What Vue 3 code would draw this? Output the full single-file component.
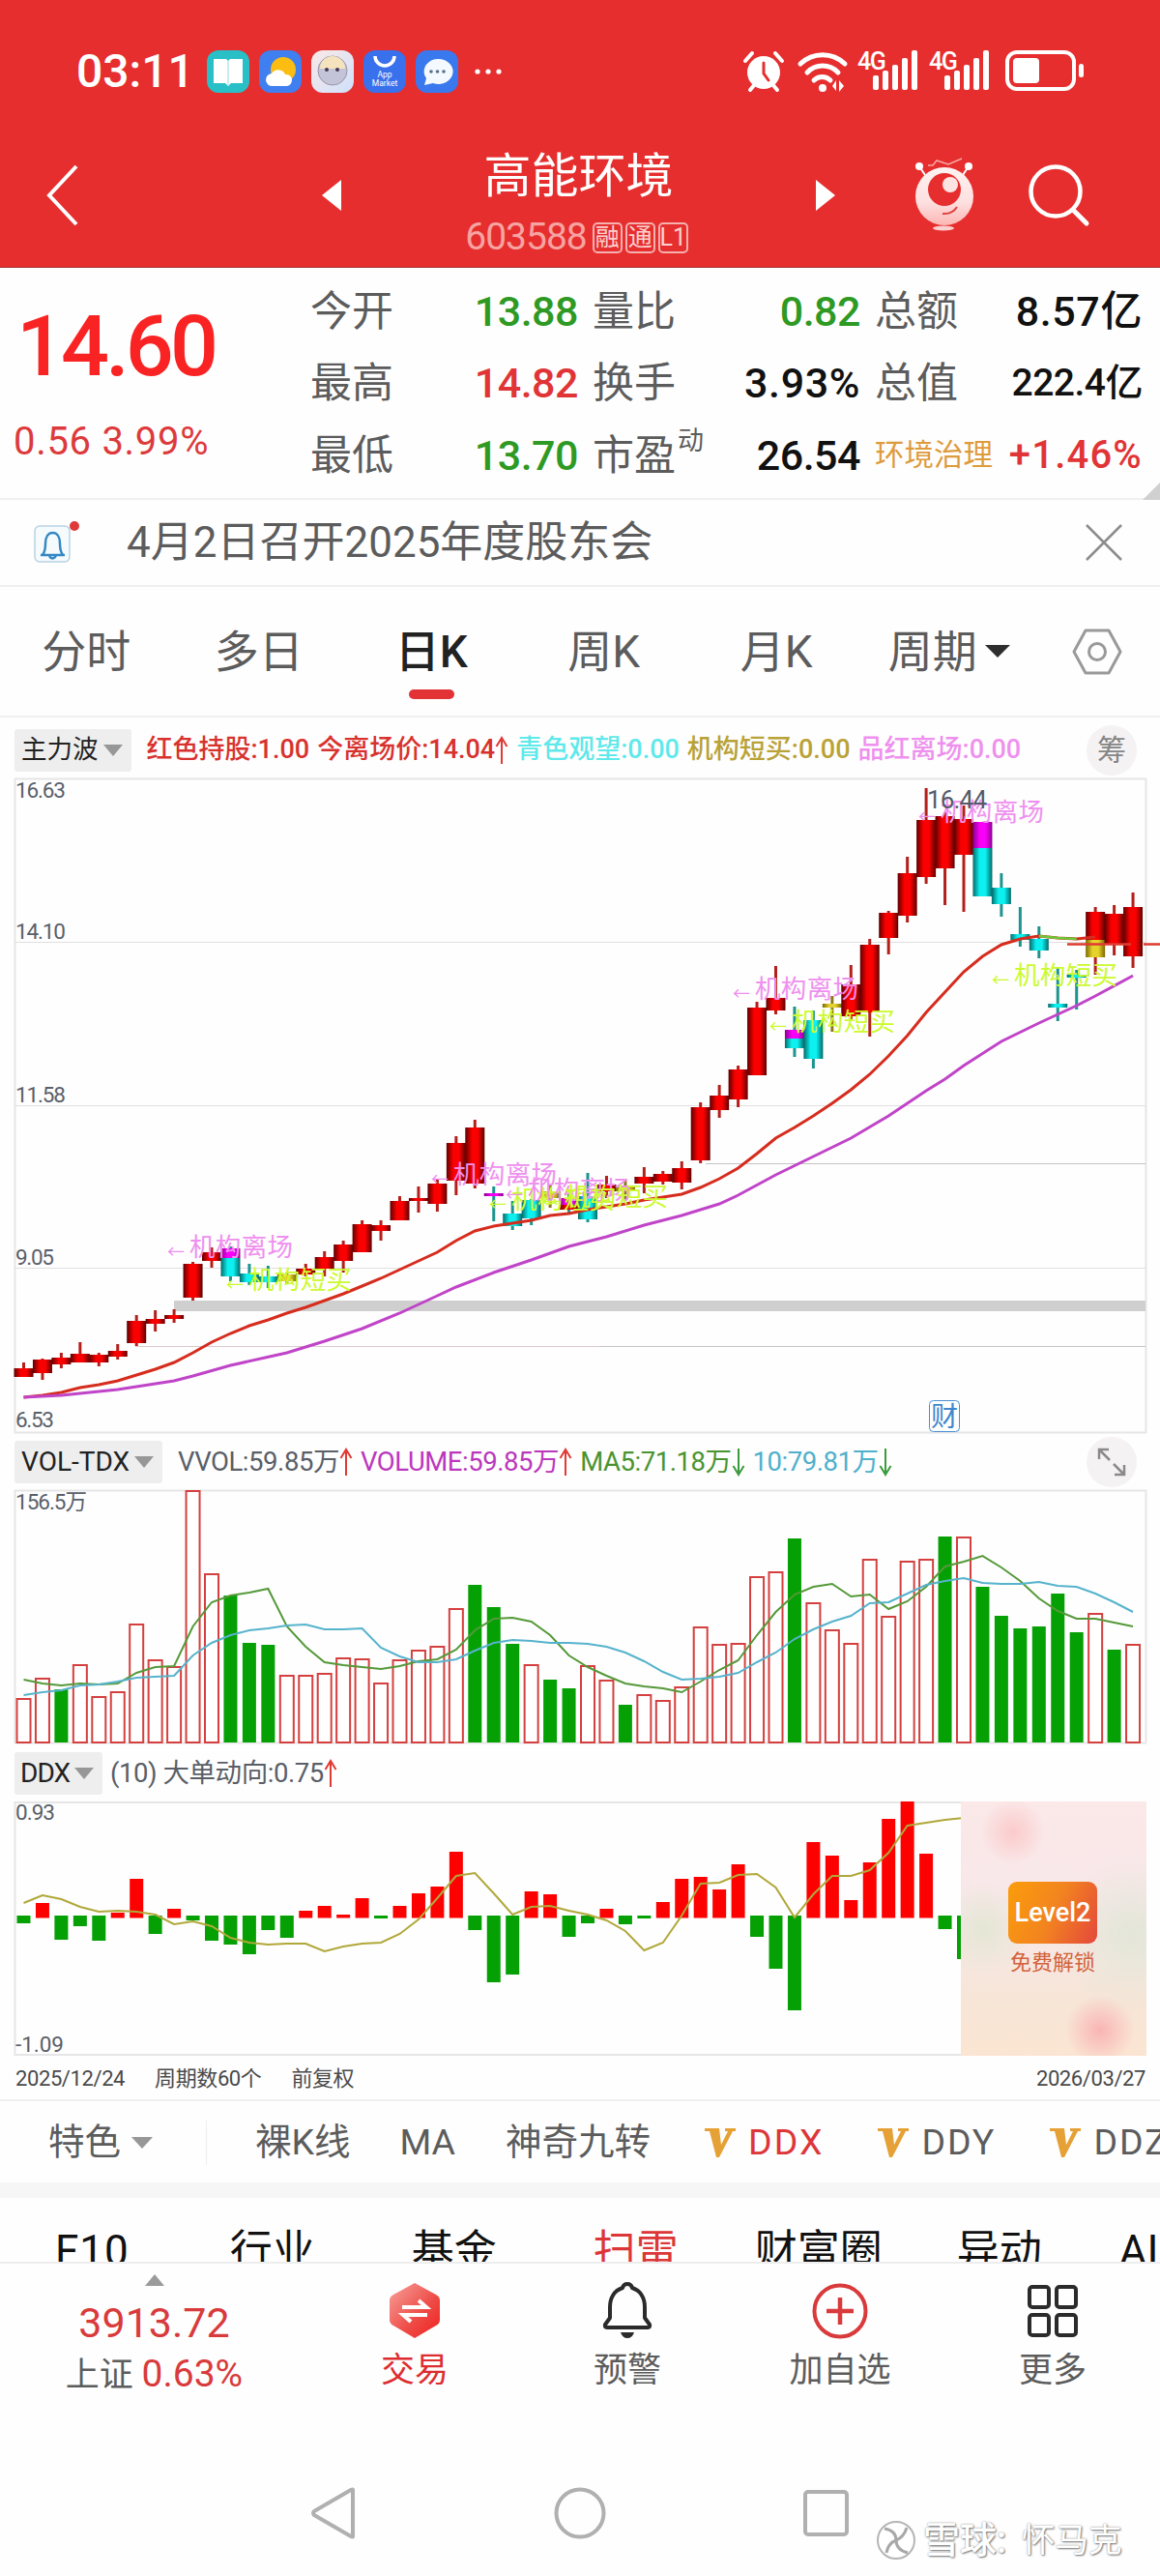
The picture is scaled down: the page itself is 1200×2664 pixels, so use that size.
<template>
  <div class="screen">
    <header class="top">
      <div class="status">
        <span class="clock">03:11</span>
        <svg class="app-icons" width="306" height="46" viewBox="0 0 306 46">
          <defs>
            <linearGradient id="bot" x1="0" y1="0" x2="1" y2="1">
              <stop offset="0" stop-color="#fbe9e6" />
              <stop offset="1" stop-color="#cfe0fb" />
            </linearGradient>
          </defs>
          <rect x="1" y="1" width="44" height="44" rx="12" fill="#28bfc6" />
          <path d="M8 10h13l2 2 2-2h13v25H26l-3 3-3-3H8z" fill="#fff" />
          <path d="M23 12v25" stroke="#b7e6ea" stroke-width="1.500" />
          <rect x="55" y="1" width="44" height="44" rx="12" fill="#3f7ff0" />
          <circle cx="80" cy="21" r="13" fill="#fbbd12" />
          <path d="M69 38a6.500 6.500 0 0 1-1-13a8 8 0 0 1 14 1a6 6 0 0 1 2 12z" fill="#fff" />
          <rect x="109" y="1" width="44" height="44" rx="12" fill="url(#bot)" />
          <circle cx="131" cy="22" r="15" fill="#c3c4d8" stroke="#9c94a8" />
          <path d="M118 20a13 13 0 0 1 26 0z" fill="#f4e3bd" />
          <circle cx="125" cy="21" r="2" fill="#4a3550" />
          <circle cx="136" cy="21" r="2" fill="#4a3550" />
          <rect x="163" y="1" width="44" height="44" rx="12" fill="#3970ec" />
          <path d="M175 7a10 10 0 0 0 20 0" fill="none" stroke="#fff" stroke-width="3.500" />
          <text x="185" y="29" class="app-text">App</text>
          <text x="185" y="38" class="app-text">Market</text>
          <rect x="217" y="1" width="44" height="44" rx="12" fill="#3a78ee" />
          <path d="M226 37l2-7a15 13 0 1 1 7 5z" fill="#f4f9ff" />
          <g fill="#5a6f8c">
            <circle cx="233" cy="23" r="1.800" />
            <circle cx="239.500" cy="23" r="1.800" />
            <circle cx="246" cy="23" r="1.800" />
          </g>
          <g fill="#fff">
            <circle cx="281" cy="23" r="2.600" />
            <circle cx="292" cy="23" r="2.600" />
            <circle cx="303" cy="23" r="2.600" />
          </g>
        </svg>
        <svg class="sys-icons" width="352" height="46" viewBox="0 0 352 46">
          <g fill="none" stroke="#fff" stroke-linecap="round">
            <path d="M2 12l7-8M40 12l-7-8M7 42l5-6M35 42l-5-6" stroke-width="4" />
            <circle cx="21" cy="24" r="17" fill="#fff" stroke="none" />
            <path d="M21 14v11l5 7" stroke="#e62e2e" stroke-width="3" />
            <path d="M59 15a33 33 0 0 1 46 0" stroke-width="5" />
            <path d="M66 24a22 22 0 0 1 32 0" stroke-width="5" />
            <path d="M73 32a12 12 0 0 1 17 0" stroke-width="5" />
          </g>
          <circle cx="82" cy="40" r="4" fill="#fff" />
          <path d="M92 38l4-6v11zM99 32v12l5-6z" fill="#fff" />
          <g fill="#fff">
            <text x="118" y="21" class="net">4G</text>
            <text x="192" y="21" class="net">4G</text>
            <template v-for="base in [134, 208]" :key="base">
              <rect v-for="n in 5" :key="n" :x="base + (n - 1) * 10" :y="42 - signal[n - 1]" width="6" :height="signal[n - 1]" rx="2" />
            </template>
            <rect x="279" y="9" width="27" height="26" rx="4" />
            <rect x="347" y="15" width="5" height="14" rx="2.500" />
          </g>
          <rect x="273" y="3" width="69" height="38" rx="10" fill="none" stroke="#fff" stroke-width="4" />
        </svg>
      </div>

      <div class="nav">
        <svg class="back" width="34" height="64" viewBox="0 0 34 64">
          <path d="M31 2L3 32l28 30" fill="none" stroke="#fff" stroke-width="4" />
        </svg>
        <svg class="prev" width="20" height="32" viewBox="0 0 20 32"><path d="M20 0v32L0 16z" fill="#fff" /></svg>
        <div class="stock">
          <h1>高能环境</h1>
          <div class="code">
            <span>603588</span><i>融</i><i>通</i><i>L1</i>
          </div>
        </div>
        <svg class="next" width="20" height="32" viewBox="0 0 20 32"><path d="M0 0v32L20 16z" fill="#fff" /></svg>
        <svg class="robot" width="62" height="76" viewBox="0 0 62 76">
          <defs>
            <linearGradient id="robot" x1="0" y1="0" x2="0" y2="1">
              <stop offset="0" stop-color="#fff3f1" />
              <stop offset=".6" stop-color="#fde0e0" />
              <stop offset="1" stop-color="#fbb6b4" />
            </linearGradient>
          </defs>
          <path d="M5 8l6 9M56 8l-6 9" stroke="#fff" stroke-width="2" />
          <circle cx="5" cy="8" r="4" fill="#fff" />
          <circle cx="56" cy="8" r="4" fill="#fff" />
          <path d="M14 7h5l4-5 12 4 14-6" fill="none" stroke="#f7a8a4" stroke-width="1.500" />
          <circle cx="31" cy="39" r="30" fill="url(#robot)" />
          <circle cx="31" cy="32" r="17" fill="#e62e2e" />
          <circle cx="37" cy="27" r="8" fill="#fde4e2" />
          <path d="M29 57q10 1 15-7" fill="none" stroke="#e0423f" stroke-width="2" />
          <ellipse cx="30" cy="72" rx="11" ry="2.500" fill="#fbcfcd" />
        </svg>
        <svg class="search" width="64" height="64" viewBox="0 0 64 64">
          <circle cx="28" cy="28" r="25.500" fill="none" stroke="#fff" stroke-width="4.500" />
          <path d="M46 47l14 14" stroke="#fff" stroke-width="5" stroke-linecap="round" />
        </svg>
      </div>
    </header>

    <section class="quote">
      <div class="price">
        <strong>14.60</strong>
        <span>0.56 3.99%</span>
      </div>
      <dl v-for="(col, c) in quotes" :key="c" :class="'col' + c">
        <div v-for="q in col" :key="q.label">
          <dt :class="{ sector: q.sector }">{{ q.label }}<sup v-if="q.sup">{{ q.sup }}</sup></dt>
          <dd :class="[q.tone, q.size]">{{ q.value }}</dd>
        </div>
      </dl>
      <i class="corner"></i>
    </section>

    <section class="notice">
      <svg width="50" height="46" viewBox="0 0 50 46">
        <rect x="2" y="6" width="36" height="37" rx="5" fill="#f5fafd" stroke="#b9d3e4" stroke-width="1.500" />
        <path d="M8 36h25M10 36q3-4 3-12c0-7 3-11 7.500-11s7.500 4 7.500 11q0 8 3 12" fill="none" stroke="#3488c4" stroke-width="2.500" />
        <path d="M17 37q3 5 7 0" fill="none" stroke="#3488c4" stroke-width="2.500" />
        <circle cx="43" cy="6" r="5" fill="#e03838" />
      </svg>
      <p>4月2日召开2025年度股东会</p>
      <svg class="close" width="38" height="38" viewBox="0 0 38 38">
        <path d="M1 1l36 36M37 1L1 37" stroke="#8c8c8c" stroke-width="2.500" />
      </svg>
    </section>

    <nav class="tabs">
      <span v-for="t in tabs" :key="t" :class="{ active: t === '日K' }">{{ t }}</span>
      <span class="more">周期<svg width="26" height="13" viewBox="0 0 26 13"><path d="M0 0h26L13 13z" fill="#2e2e2e" /></svg></span>
      <svg class="hex" width="52" height="48" viewBox="0 0 52 48">
        <path d="M14 2h24l12 22-12 22H14L2 24z" fill="none" stroke="#999" stroke-width="3" stroke-linejoin="round" />
        <circle cx="26" cy="24" r="8.500" fill="none" stroke="#999" stroke-width="3" />
      </svg>
    </nav>

    <div class="indicator main-ind">
      <b class="tag">主力波<i class="caret"></i></b>
      <div class="values">
        <span class="c-red">红色持股:1.00</span>
        <span class="c-red">今离场价:14.04<Arrow up /></span>
        <span class="c-cyan">青色观望:0.00</span>
        <span class="c-gold">机构短买:0.00</span>
        <span class="c-pink">品红离场:0.00</span>
      </div>
      <span class="round">筹</span>
    </div>

    <svg class="k-chart" width="1200" height="678" viewBox="0 0 1200 678">
      <defs>
        <linearGradient v-for="(g, key) in bodyFill" :id="'body-' + key" :key="key">
          <stop offset="0" :stop-color="g[0]" />
          <stop offset=".35" :stop-color="g[1]" />
          <stop offset=".65" :stop-color="g[1]" />
          <stop offset="1" :stop-color="g[0]" />
        </linearGradient>
      </defs>
      <rect x="15.500" y=".5" width="1170" height="676" class="frame" />
      <path d="M15 169.500H1185M15 338.500H1185M15 506.500H1185" class="grid" />
      <path d="M730 398.500H1185M620 587.500H1185" stroke="#c4c4c4" />
      <path d="M140 587.500H620" stroke="#dcc9cc" />
      <rect x="180" y="540" width="1005" height="11" fill="#cfcfcf" />
      <g class="axis">
        <text x="16" y="20" textLength="52">16.63</text>
        <text x="16" y="166" textLength="52">14.10</text>
        <text x="16" y="335" textLength="52">11.58</text>
        <text x="16" y="503" textLength="40">9.05</text>
        <text x="16" y="671" textLength="40">6.53</text>
      </g>
      <g v-for="(k, i) in candles" :key="i">
        <rect :x="barX(i) - 1.5" :y="k[2]" width="3" :height="k[3] - k[2]" :fill="wickFill[k[4]]" />
        <rect :x="barX(i) - 10" :y="k[0]" width="20" :height="k[1] - k[0]" :fill="`url(#body-${k[4]})`" />
        <rect v-if="k[5]" :x="barX(i) - 10" :y="k[5]" width="20" :height="k[6] - k[5]" :fill="`url(#body-${k[7]})`" />
      </g>
      <polyline :points="line(ma20)" fill="none" stroke="#d62c1e" stroke-width="3" />
      <polyline :points="line(ma20.slice(54, 57), 54)" fill="none" stroke="#6cc93a" stroke-width="2.500" />
      <polyline :points="sparse(ma40)" fill="none" stroke="#c044c8" stroke-width="3" />
      <path d="M1104 171.500h66M1183 171.500h17" stroke="#e03a30" stroke-width="2.500" />
      <g v-for="(m, i) in marks" :key="i" :class="['mark', m.kind]">
        <text :x="m.x" :y="m.y + 2" class="mark-arrow" textLength="18">←</text>
        <text :x="m.x + 23" :y="m.y" textLength="107">{{ m.kind === 'out' ? '机构离场' : '机构短买' }}</text>
      </g>
      <text x="959" y="31" textLength="62" class="peak">16.44</text>
      <rect x="961.500" y="643.500" width="31" height="32" rx="4" fill="#fff" stroke="#4a8fd0" />
      <text x="977" y="670" class="cai">财</text>
    </svg>

    <div class="indicator vol-ind">
      <b class="tag">VOL-TDX<i class="caret"></i></b>
      <div class="values">
        <span class="c-gray">VVOL:59.85万<Arrow up /></span>
        <span class="c-purple">VOLUME:59.85万<Arrow up /></span>
        <span class="c-green">MA5:71.18万<Arrow /></span>
        <span class="c-sky">10:79.81万<Arrow /></span>
      </div>
      <span class="round">
        <svg width="30" height="30" viewBox="0 0 30 30">
          <path d="M2 12V2h10M2 2l11 11M28 18v10H18M28 28L17 17" fill="none" stroke="#8a8a8a" stroke-width="2.500" />
        </svg>
      </span>
    </div>

    <svg class="vol-chart" width="1200" height="264" viewBox="0 0 1200 264">
      <rect x="15.500" y=".5" width="1170" height="261" class="frame" />
      <text x="16" y="20" class="axis" textLength="74">156.5万</text>
      <template v-for="(v, i) in volumes" :key="i">
        <rect v-if="isDown(i)" :x="barX(i) - 7" :y="v" width="14" :height="261 - v" fill="#04a004" />
        <rect v-else :x="barX(i) - 7" :y="v + 1" width="14" :height="260 - v" fill="#fff" stroke="#d4403f" stroke-width="2" />
      </template>
      <polyline :points="line(volMa5)" fill="none" stroke="#55993a" stroke-width="2" />
      <polyline :points="line(volMa10)" fill="none" stroke="#56b3cc" stroke-width="2" />
    </svg>

    <div class="indicator ddx-ind">
      <b class="tag">DDX<i class="caret"></i></b>
      <div class="values">
        <span class="c-gray">(10) 大单动向:0.75<Arrow up /></span>
      </div>
    </div>

    <div class="ddx">
      <svg width="994" height="264" viewBox="0 0 994 264">
        <path d="M994 1H15.500V262H994" class="frame" />
        <g class="axis">
          <text x="16" y="19" textLength="41">0.93</text>
          <text x="16" y="259" textLength="50">-1.09</text>
        </g>
        <template v-for="(v, i) in ddx" :key="i">
          <rect v-if="v < 118" :x="barX(i) - 7" :y="v" width="14" :height="120.5 - v" fill="#fd0000" />
          <rect v-else :x="barX(i) - 7" y="118" width="14" :height="v - 118" fill="#04a004" />
        </template>
        <polyline :points="line(ddxLine)" fill="none" stroke="#b0a83a" stroke-width="2" />
      </svg>
      <div class="promo">
        <b>Level2</b>
        <span>免费解锁</span>
      </div>
    </div>

    <div class="dates">
      <span>2025/12/24</span>
      <span>周期数60个</span>
      <span>前复权</span>
      <span class="end">2026/03/27</span>
    </div>

    <div class="features">
      <span class="special">特色<i class="caret"></i></span>
      <span class="plain">裸K线</span>
      <span class="ma">MA</span>
      <span class="nine">神奇九转</span>
      <span v-for="d in ['DDX', 'DDY', 'DDZ']" :key="d" class="vip" :class="{ on: d === 'DDX' }">
        <svg width="32" height="30" viewBox="0 0 32 30">
          <path d="M0 0h15l2 17 7-14h-3V0h11v3h-3L15 30h-3L5 3H0z" fill="#e5a136" />
        </svg>{{ d }}
      </span>
    </div>

    <div class="sections">
      <span v-for="(s, i) in sections" :key="s" :class="['s' + i, { on: s === '扫雷' }]">{{ s }}</span>
    </div>

    <footer class="toolbar">
      <div class="index">
        <svg width="22" height="12" viewBox="0 0 22 12"><path d="M11 0l10 12H1z" fill="#9b9b9b" /></svg>
        <strong>3913.72</strong>
        <span>上证 <em>0.63%</em></span>
      </div>
      <div class="tool trade">
        <svg width="60" height="60" viewBox="0 0 60 60">
          <defs>
            <linearGradient id="trade" x1="0" y1="0" x2="1" y2="1">
              <stop offset="0" stop-color="#f7a29c" />
              <stop offset=".6" stop-color="#ee4a45" />
              <stop offset="1" stop-color="#f02020" />
            </linearGradient>
          </defs>
          <path d="M30 2l22 12q4 2 4 6v20q0 4-4 6L30 59 8 46q-4-2-4-6V20q0-4 4-6z" fill="url(#trade)" />
          <path d="M17 27h25l-8-7M43 35H18l8 7" fill="none" stroke="#fff" stroke-width="4" />
        </svg>
        <span>交易</span>
      </div>
      <div class="tool">
        <svg width="60" height="60" viewBox="0 0 60 60">
          <path d="M30 3q4 0 5 4c9 3 13 11 13 20v11l5 7q1 3-2 3H9q-3 0-2-3l5-7V27c0-9 4-17 13-20q1-4 5-4z" fill="none" stroke="#2b2b2b" stroke-width="4" stroke-linejoin="round" />
          <path d="M23 53h14q-2 6-7 6t-7-6z" fill="#2b2b2b" />
        </svg>
        <span>预警</span>
      </div>
      <div class="tool">
        <svg width="60" height="60" viewBox="0 0 60 60">
          <circle cx="30" cy="31" r="26.500" fill="none" stroke="#d93a3c" stroke-width="4" />
          <path d="M30 17v28M16 31h28" stroke="#d93a3c" stroke-width="4.500" />
        </svg>
        <span>加自选</span>
      </div>
      <div class="tool">
        <svg width="60" height="60" viewBox="0 0 60 60">
          <g fill="none" stroke="#2b2b2b" stroke-width="4">
            <rect x="6" y="6" width="20" height="21" rx="3" />
            <rect x="34" y="6" width="20" height="21" rx="3" />
            <rect x="6" y="35" width="20" height="21" rx="3" />
            <rect x="34" y="35" width="20" height="21" rx="3" />
          </g>
        </svg>
        <span>更多</span>
      </div>
    </footer>

    <div class="system-nav">
      <svg width="560" height="60" viewBox="0 0 560 60">
        <g fill="none" stroke="#b0b0b0" stroke-width="4" stroke-linejoin="round">
          <path d="M45 6v48q0 1-2 0L5 32q-2-2 0-4L43 6q2-1 2 0z" />
          <circle cx="280" cy="30" r="24.500" />
          <rect x="513" y="8" width="43" height="44" rx="3" />
        </g>
      </svg>
    </div>

    <div class="watermark">
      <svg width="44" height="44" viewBox="0 0 44 44">
        <circle cx="22" cy="22" r="19" fill="#fff" stroke="#b5b5b5" stroke-width="2" />
        <path d="M10 10q12 2 12 12t12 13M33 9q-3 10-11 13t-10 13" fill="none" stroke="#a8a8a8" stroke-width="3" />
      </svg>
      <b>雪球:</b><span>怀马克</span>
    </div>
  </div>
</template>

<script setup>
import { h } from 'vue';

const Arrow = (props) =>
  h('svg', { width: 14, height: 30, viewBox: '0 0 14 30', class: 'arrow' }, [
    h('path', {
      d: props.up ? 'M7 29V2M1.5 11L7 2l5.5 9' : 'M7 1v27M1.5 19L7 28l5.5-9',
      fill: 'none',
      stroke: props.up ? '#e03a34' : '#3b9a3b',
      'stroke-width': 2,
    }),
  ]);
Arrow.props = { up: Boolean };

const signal = [15, 20, 26, 33, 41];

const quotes = [
  [
    { label: '今开', value: '13.88', tone: 'down' },
    { label: '最高', value: '14.82', tone: 'up' },
    { label: '最低', value: '13.70', tone: 'down' },
  ],
  [
    { label: '量比', value: '0.82', tone: 'down' },
    { label: '换手', value: '3.93%', size: 'wide' },
    { label: '市盈', sup: '动', value: '26.54' },
  ],
  [
    { label: '总额', value: '8.57亿', size: 'wide' },
    { label: '总值', value: '222.4亿', size: 'small' },
    { label: '环境治理', sector: true, value: '+1.46%', tone: 'up', size: 'change' },
  ],
];

const tabs = ['分时', '多日', '日K', '周K', '月K'];
const sections = ['F10', '行业', '基金', '扫雷', '财富圈', '异动', 'AI'];

const bodyFill = {
  r: ['#5e0000', '#fa0000'],
  c: ['#046a6a', '#0cf0f0'],
  m: ['#8a0090', '#f800f8'],
  y: ['#7a6a00', '#e6d22c'],
};
const wickFill = { r: '#b3201c', c: '#1d9490', m: '#1d9490', y: '#8d7a1a' };

// body top, body bottom, high, low, kind, then an optional second segment
const candles = [
  [610, 619, 604, 619, 'r'], [601, 615, 600, 622, 'r'], [599, 606, 594, 610, 'r'], [595, 604, 583, 604, 'r'],
  [596, 604, 594, 608, 'r'], [592, 598, 585, 601, 'r'], [561, 584, 555, 587, 'r'], [559, 564, 550, 572, 'r'],
  [555, 559, 549, 563, 'r'], [502, 537, 500, 540, 'r'], [490, 499, 485, 506, 'r'], [486, 496, 484, 520, 'm', 496, 515, 'c'],
  [512, 521, 502, 524, 'c'], [515, 521, 504, 527, 'c'], [513, 520, 511, 523, 'y'], [507, 513, 502, 515, 'r'],
  [495, 507, 489, 515, 'r'], [482, 499, 478, 511, 'r'], [461, 490, 457, 490, 'r'], [462, 468, 457, 478, 'r'],
  [437, 457, 432, 457, 'r'], [434, 437, 422, 449, 'r'], [419, 440, 415, 448, 'r'], [377, 416, 370, 431, 'r'],
  [361, 419, 353, 424, 'r'], [429, 432, 422, 458, 'm'], [450, 463, 437, 467, 'c'], [436, 455, 435, 462, 'c'],
  [427, 434, 420, 444, 'y'], [434, 441, 430, 450, 'm', 441, 446, 'r'], [432, 456, 408, 459, 'c'], [420, 427, 411, 434, 'r'],
  [421, 427, 414, 436, 'y'], [412, 419, 402, 429, 'r'], [409, 417, 406, 420, 'r'], [403, 418, 396, 425, 'r'],
  [340, 395, 335, 398, 'r'], [328, 343, 317, 351, 'r'], [301, 332, 297, 340, 'r'], [237, 307, 231, 307, 'r'],
  [227, 240, 194, 244, 'r'], [260, 269, 236, 288, 'm', 269, 279, 'c'], [250, 290, 240, 300, 'c'], [233, 237, 225, 262, 'y'],
  [213, 246, 193, 249, 'r'], [172, 242, 166, 267, 'r'], [139, 165, 137, 182, 'r'], [98, 142, 81, 149, 'r'],
  [43, 102, 10, 109, 'r'], [39, 93, 35, 131, 'r'], [42, 79, 28, 138, 'r'], [45, 72, 45, 122, 'm', 72, 122, 'c'],
  [113, 130, 98, 143, 'c'], [161, 167, 133, 174, 'c'], [166, 178, 153, 186, 'c'], [233, 237, 196, 251, 'c'],
  [203, 206, 198, 239, 'c'], [138, 167, 133, 203, 'r', 167, 185, 'y'], [140, 172, 131, 183, 'r'], [133, 184, 118, 196, 'r'],
];

const ma20 = [
  640, 638, 635, 630, 627, 623, 617, 611, 604, 594, 583, 574, 566, 560, 553, 547, 540, 533, 525, 517,
  508, 499, 490, 478, 468, 463, 460, 457, 452, 450, 446, 443, 440, 436, 433, 430, 423, 414, 403, 388,
  372, 361, 349, 336, 322, 306, 287, 266, 242, 221, 200, 184, 172, 166, 163, 165, 166, 164,
];
const ma40 = [
  [0, 640], [2, 638], [5, 632], [8, 623], [9, 618], [11, 607], [14, 594], [16, 582], [18, 569], [20, 553],
  [22, 535], [23, 526], [25, 511], [27, 498], [29, 484], [31, 474], [33, 462], [35, 452], [37, 440], [38, 431],
  [40, 410], [42, 391], [44, 372], [46, 349], [48, 323], [49, 311], [50, 297], [52, 272], [54, 253], [56, 235],
  [57, 225], [59, 204],
];

const marks = [
  { kind: 'out', x: 173, y: 494 },
  { kind: 'buy', x: 234, y: 528 },
  { kind: 'out', x: 446, y: 419 },
  { kind: 'buy', x: 506, y: 445 },
  { kind: 'out', x: 523, y: 435 },
  { kind: 'buy', x: 561, y: 442 },
  { kind: 'out', x: 758, y: 227 },
  { kind: 'buy', x: 796, y: 261 },
  { kind: 'out', x: 950, y: 44 },
  { kind: 'buy', x: 1026, y: 213 },
];

// y positions inside each chart, one per day
const volumes = [
  215, 194, 206, 180, 213, 208, 138, 175, 182, 0, 86, 109, 158, 160, 191, 191, 189, 173, 174, 199,
  175, 165, 161, 122, 98, 121, 159, 180, 196, 205, 181, 196, 222, 211, 217, 203, 141, 159, 158, 89,
  84, 50, 116, 144, 158, 71, 130, 73, 71, 48, 48, 100, 130, 143, 141, 107, 147, 127, 165, 159,
];
const downDays = [2, 11, 12, 13, 24, 25, 26, 28, 29, 32, 41, 49, 51, 52, 53, 54, 55, 56, 58];
const volMa5 = [
  196, 200, 202, 200, 201, 200, 189, 183, 182, 141, 116, 109, 106, 102, 141, 162, 178, 181, 183, 185,
  182, 177, 175, 165, 145, 133, 132, 136, 150, 171, 183, 192, 200, 203, 205, 209, 198, 186, 176, 150,
  126, 108, 100, 97, 110, 108, 123, 115, 100, 79, 74, 68, 80, 94, 112, 125, 133, 133, 137, 141,
];
const volMa10 = [
  212, 209, 207, 202, 201, 198, 194, 193, 192, 171, 158, 150, 145, 143, 140, 139, 144, 144, 143, 163,
  172, 178, 178, 175, 166, 158, 155, 156, 158, 158, 159, 162, 168, 177, 188, 196, 195, 193, 189, 178,
  168, 154, 144, 136, 130, 117, 116, 107, 98, 94, 91, 96, 97, 97, 95, 99, 100, 107, 116, 126,
];
const ddx = [
  126, 105, 143, 129, 144, 115, 80, 137, 111, 123, 144, 148, 158, 133, 141, 113, 108, 117, 100, 121,
  108, 95, 88, 52, 133, 187, 179, 93, 96, 140, 126, 111, 127, 121, 104, 80, 78, 91, 65, 140,
  173, 216, 42, 56, 102, 63, 18, 0, 54, 132, 163,
];
const ddxLine = [
  105, 97, 101, 109, 114, 113, 114, 117, 127, 124, 129, 141, 146, 148, 147, 147, 155, 150, 147, 146,
  137, 122, 100, 77, 74, 95, 117, 109, 108, 113, 117, 123, 134, 154, 146, 118, 85, 84, 76, 75,
  89, 120, 96, 77, 77, 71, 53, 25, 22, 19, 17,
];

const barX = (i) => 24.5 + i * 19.45;
const isDown = (i) => downDays.includes(i);
const line = (ys, from = 0) => ys.map((y, i) => `${barX(i + from)},${y}`).join(' ');
const sparse = (pts) => pts.map(([i, y]) => `${barX(i)},${y}`).join(' ');
</script>

<style>
body {
  margin: 0;
  background: #fff;
}
</style>

<style scoped>
.screen {
  position: relative;
  display: flex;
  flex-direction: column;
  width: 1200px;
  height: 2664px;
  overflow: hidden;
  background: #fefefe;
  color: #5c5c5c;
  font-family: Roboto, 'Noto Sans CJK SC', sans-serif;
  line-height: 1;
  white-space: nowrap;
}

.screen > * {
  flex-shrink: 0;
  box-sizing: border-box;
}

svg {
  display: block;
  flex-shrink: 0;
  overflow: visible;
}

i,
em {
  font-style: normal;
}

/* header */
.top {
  height: 277px;
  background: #e62e2e;
  border-bottom: 1px solid #a83434;
  color: #fff;
}

.status {
  display: flex;
  align-items: center;
  height: 148px;
  padding: 0 79px;
}

.clock {
  width: 134px;
  font-size: 48px;
  font-weight: 500;
}

.sys-icons {
  margin-left: auto;
}

.app-text {
  fill: #fff;
  font-size: 8.5px;
  text-anchor: middle;
}

.net {
  font-size: 25px;
  font-weight: 500;
  letter-spacing: -1.5px;
}

.nav {
  display: flex;
  align-items: center;
  height: 108px;
  padding-left: 48px;
}

.prev {
  margin-left: 251px;
}

.stock {
  width: 491px;
  text-align: center;
}

.stock h1 {
  margin: 19px 0 19px;
  font-size: 49px;
  font-weight: 400;
}

.code {
  display: flex;
  justify-content: center;
  align-items: center;
  gap: 3px;
  margin-left: -4px;
  font-size: 39px;
  color: #f6a3a1;
  letter-spacing: -1px;
}

.code span {
  margin-right: 3px;
}

.code i {
  display: flex;
  align-items: center;
  justify-content: center;
  box-sizing: border-box;
  width: 31px;
  height: 32px;
  border: 2px solid #f6b0ae;
  border-radius: 5px;
  font-size: 25px;
  letter-spacing: 0;
  color: #fbd0cf;
}

.robot {
  margin: 0 56px 0 82px;
}

/* quote */
.quote {
  position: relative;
  display: flex;
  height: 240px;
  padding-top: 8px;
  border-bottom: 2px solid #f0f0f0;
}

.price {
  width: 321px;
  padding: 29px 0 0 17px;
  box-sizing: border-box;
  color: #fa2323;
}

.price strong {
  display: block;
  font-size: 88px;
  font-weight: 500;
  letter-spacing: -3.9px;
}

.price span {
  display: block;
  margin: 35px 0 0 -3px;
  font-size: 40px;
  letter-spacing: 0.7px;
  color: #dd3a3c;
}

dl {
  margin: 0;
}

.col0 {
  width: 277px;
}

.col1 {
  width: 277px;
  margin-left: 15px;
}

.col2 {
  width: 277px;
  margin-left: 15px;
}

dl div {
  display: flex;
  align-items: center;
  justify-content: space-between;
  height: 74.5px;
}

dt {
  position: relative;
  font-size: 43px;
}

dt sup {
  position: absolute;
  left: 88px;
  top: -7px;
  font-size: 27px;
  line-height: 1;
}

dt.sector {
  font-size: 30.5px;
  color: #de9b3c;
}

dd {
  margin: 0;
  font-size: 43px;
  font-weight: 500;
  letter-spacing: -0.5px;
  color: #111;
}

dd.wide {
  letter-spacing: 0.6px;
}

dd.small {
  font-size: 39px;
}

dd.change {
  font-size: 40px;
  letter-spacing: 1.2px;
}

dd.up {
  color: #e03436;
}

dd.down {
  color: #2e9a24;
}

.corner {
  position: absolute;
  right: 0;
  bottom: -2px;
  border-left: 18px solid transparent;
  border-bottom: 18px solid #d0d0d0;
}

/* notice */
.notice {
  display: flex;
  align-items: center;
  height: 90px;
  padding: 0 39px 0 34px;
  border-bottom: 2px solid #f0f0f0;
}

.notice p {
  flex: 1;
  margin: 0 0 0 47px;
  font-size: 44px;
}

/* tabs */
.tabs {
  display: flex;
  align-items: center;
  height: 135px;
  border-bottom: 2px solid #f0f0f0;
}

.tabs span {
  position: relative;
  width: 178.5px;
  font-size: 46px;
  text-align: center;
}

.tabs .active {
  color: #222;
  font-weight: 500;
}

.tabs .active::after {
  content: '';
  position: absolute;
  left: 66px;
  bottom: -26px;
  width: 47px;
  height: 10px;
  border-radius: 5px;
  background: #e23236;
}

.tabs .more {
  display: flex;
  align-items: center;
  justify-content: center;
  gap: 8px;
}

.hex {
  margin-left: 38px;
}

/* indicator rows */
.indicator {
  display: flex;
  align-items: center;
  padding: 0 24px 0 15px;
}

.main-ind {
  height: 63px;
  padding-top: 4px;
}

.vol-ind {
  height: 58px;
}

.ddx-ind {
  height: 58px;
}

.tag {
  display: flex;
  align-items: center;
  box-sizing: border-box;
  height: 44px;
  margin-right: 16px;
  padding: 0 9px 0 7px;
  border-radius: 3px;
  background: #eee;
  color: #222;
  font-size: 28px;
  font-weight: 400;
}

.main-ind .tag {
  font-size: 26.5px;
}

.ddx-ind .tag {
  margin-right: 8px;
  padding-left: 6px;
  letter-spacing: -1px;
}

.caret {
  margin-left: 5px;
  border: 10px solid transparent;
  border-top: 12px solid #979797;
  border-bottom: 0;
}

.values {
  display: flex;
  gap: 8px;
  font-size: 27.5px;
  letter-spacing: -0.45px;
}

.main-ind .values {
  font-size: 27px;
  font-weight: 500;
  letter-spacing: 0;
}

.values span {
  display: flex;
  align-items: center;
}

.arrow {
  margin: -3px 0;
}

.c-red { color: #d8322e; }
.c-cyan { color: #5fe9ea; }
.c-gold { color: #b9a236; }
.c-pink { color: #ee90ee; }
.c-gray { color: #5a5f68; }
.c-purple { color: #bb38bd; }
.c-green { color: #4a9430; }
.c-sky { color: #4fb0cc; }

.round {
  display: flex;
  align-items: center;
  justify-content: center;
  width: 52px;
  height: 52px;
  margin-left: auto;
  border-radius: 50%;
  background: #f5f2f3;
  color: #858585;
  font-size: 30px;
}

/* charts */
.frame {
  fill: none;
  stroke: #e6e6e6;
  stroke-width: 2;
}

.grid {
  stroke: #e0e0e0;
}

.axis {
  fill: #5a606a;
  font-size: 22.5px;
}

.mark {
  font-size: 26.5px;
}

.mark-arrow {
  font-size: 18px;
}

.out {
  fill: #ee90ee;
}

.buy {
  fill: #ccfa2e;
}

.peak {
  fill: #545a68;
  font-size: 26px;
}

.cai {
  fill: #3f87cc;
  font-size: 28px;
  text-anchor: middle;
}

.ddx {
  display: flex;
  height: 264px;
}

.promo {
  display: flex;
  flex-direction: column;
  align-items: center;
  width: 192px;
  height: 263px;
  background:
    radial-gradient(circle at 28% 12%, #fbcaca 0, rgba(251, 202, 202, 0) 34px),
    radial-gradient(circle at 75% 90%, #f9b4b4 0, rgba(249, 180, 180, 0) 36px),
    radial-gradient(circle at 12% 50%, rgba(226, 230, 210, 0.9) 0, rgba(226, 230, 210, 0) 50px),
    radial-gradient(circle at 92% 52%, rgba(224, 230, 214, 0.9) 0, rgba(224, 230, 214, 0) 80px),
    linear-gradient(#fbe8e8, #f8e8ea 45%, #f7e5d6 80%, #fbe5d2);
}

.promo b {
  margin: 83px 2px 0 0;
  width: 92px;
  border-radius: 9px;
  background: linear-gradient(115deg, #fb9d0a, #f28420 50%, #e4473c);
  color: #fff;
  font-size: 27px;
  font-weight: 500;
  line-height: 64px;
  text-align: center;
}

.promo span {
  margin: 9px 2px 0 0;
  color: #d3623a;
  font-size: 22px;
}

.dates {
  display: flex;
  align-items: center;
  height: 46px;
  padding: 2px 15px 0 16px;
  border-bottom: 2px solid #f0f0f0;
  color: #4a4a4a;
  font-size: 22px;
  letter-spacing: -0.4px;
}

.dates span + span {
  margin-left: 31px;
}

.dates span.end {
  margin-left: auto;
}

/* feature strip */
.features {
  display: flex;
  align-items: center;
  height: 84px;
  padding: 2px 0 0 50px;
  overflow: hidden;
  font-size: 37.5px;
}

.features span {
  flex-shrink: 0;
}

.special {
  display: flex;
  align-items: center;
  box-sizing: border-box;
  width: 164px;
  height: 46px;
  border-right: 1px solid #eee;
}

.special .caret {
  margin-left: 11px;
  border-width: 12px 11px 0;
}

.plain {
  margin-left: 50px;
}

.ma {
  margin-left: 51px;
}

.nine {
  margin-left: 52px;
}

.vip {
  display: flex;
  align-items: center;
  gap: 13px;
  margin-left: 56px;
  letter-spacing: 2px;
}

.vip.on,
.sections .on {
  color: #dd3639;
}

.sections {
  display: flex;
  height: 84px;
  padding: 33px 0 0 57px;
  border-top: 16px solid #f6f6f6;
  border-bottom: 2px solid #ededed;
  overflow: hidden;
  color: #111;
  font-size: 44px;
}

.s0 { letter-spacing: 1px; }
.s1 { margin-left: 104px; }
.s2 { margin-left: 100px; }
.s3 { margin-left: 100px; }
.s4 { margin-left: 79px; }
.s5 { margin-left: 77px; }
.s6 { margin-left: 80px; }

/* bottom toolbar */
.toolbar {
  display: flex;
  height: 179px;
}

.index {
  display: flex;
  flex-direction: column;
  align-items: center;
  width: 319px;
  padding-top: 11px;
  color: #d93a3c;
}

.index strong {
  margin-top: 17px;
  font-size: 43px;
  font-weight: 400;
}

.index span {
  margin-top: 12px;
  color: #5c5c5c;
  font-size: 35px;
}

.index em {
  color: #d93a3c;
  font-size: 39px;
}

.tool {
  display: flex;
  flex-direction: column;
  align-items: center;
  width: 220px;
  padding-top: 18px;
  font-size: 35px;
}

.tool span {
  margin-top: 15px;
}

.trade {
  color: #dd2d30;
}

.system-nav {
  display: flex;
  justify-content: center;
  padding-top: 49px;
}

.watermark {
  position: absolute;
  left: 905px;
  top: 2605px;
  display: flex;
  align-items: center;
  color: #fff;
  font-size: 34.5px;
  text-shadow: 1px 1px 2px #777, 0 0 2px #999;
}

.watermark b {
  margin: 0 16px 0 6px;
  font-size: 38px;
  font-weight: 500;
}
</style>
